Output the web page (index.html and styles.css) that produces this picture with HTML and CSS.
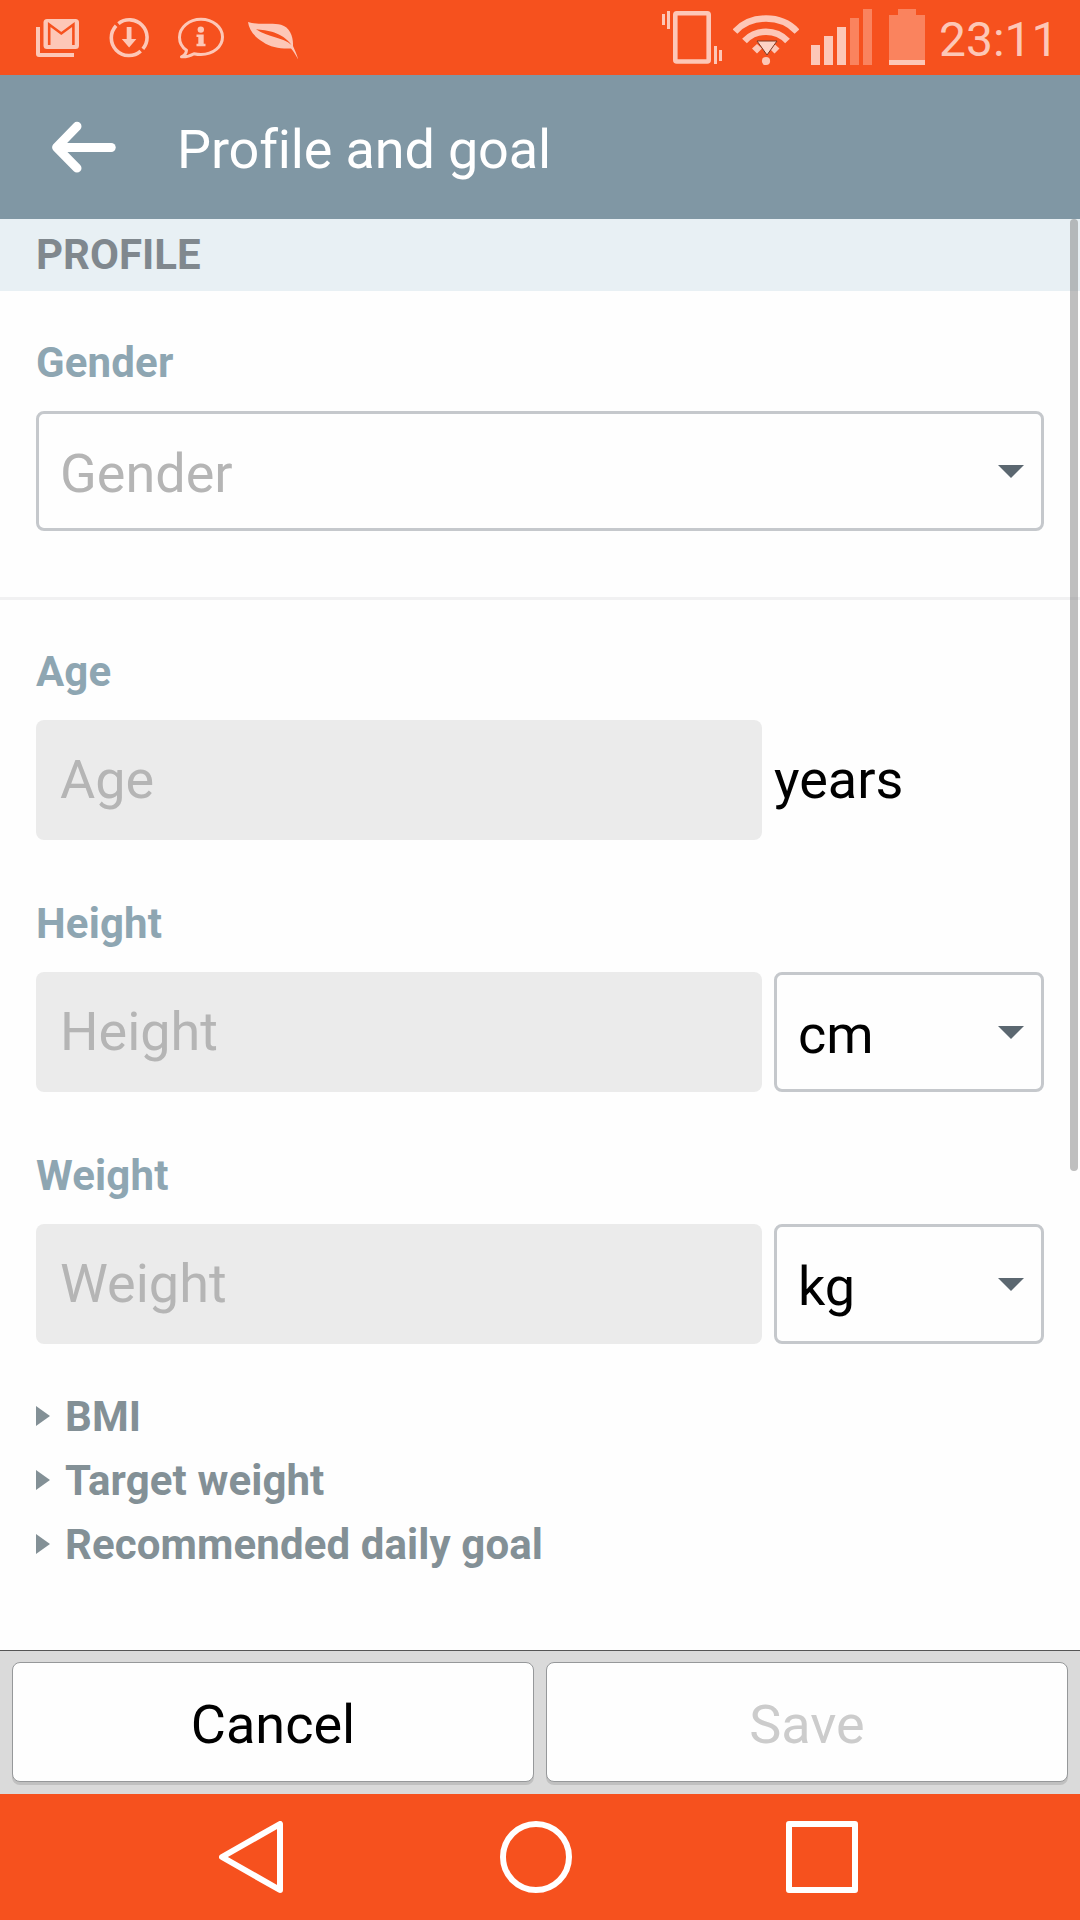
FILE: index.html
```html
<!DOCTYPE html>
<html lang="en">
<head>
<meta charset="utf-8">
<title>Profile and goal</title>
<link rel="stylesheet" href="styles.css">
</head>
<body>
<div class="screen">
  <div class="status-bar">
    <div class="status-left">
      <svg class="status-icon" width="45" height="75" viewBox="35 0 45 75">
        <path class="tint" d="M36 27h4v26h34v4H39a3 3 0 0 1-3-3z"/>
        <rect class="tint" x="43.5" y="19" width="35.5" height="30" rx="3.5"/>
        <path class="cut" d="M49.200 45V24.500L61.300 33.500 73.400 24.500V45"/>
      </svg>
      <svg class="status-icon" width="40" height="75" viewBox="109 0 40 75">
        <path class="ring" d="M118.400 23.600A17.700 17.700 0 0 1 142.900 48.900M140.700 51.100A17.700 17.700 0 0 1 116.100 25.700"/>
        <path class="tint" d="M126.700 27h4.800v12h4.900l-7.300 8.500-7.300-8.500h4.900z"/>
      </svg>
      <svg class="status-icon" width="46" height="75" viewBox="178 0 46 75">
        <path class="bubble" d="M186.500 50.300C181.800 47 179.500 42.500 179.500 37.200 179.500 27.300 189 19.300 201 19.300s21.500 8 21.500 17.700S213 54.500 201 54.500c-2.500 0-4.800-.3-7-.8-3.300 2-7.500 3.300-12.500 3.100 3.200-1.600 4.800-3.800 5-6.500z"/>
        <circle class="tint" cx="200.800" cy="29.600" r="3.200"/>
        <path class="tint" d="M196.500 34.500h7.200v9.300h1.800v2.500h-9v-2.500h1.800v-6.800h-1.800z"/>
      </svg>
      <svg class="status-icon leaf" width="52" height="75" viewBox="247 0 52 75">
        <path class="tint" d="M248 22c10 3.500 24 .5 33 2.800 9 2.500 12.500 12 12 21.200 1.500 3.500 4 8.500 5.200 13.500-2.200-4-4.700-8.500-7.200-11-10 .5-20.500-1-28-6.500C253 36 249 29 248 22z"/>
        <path class="vein" d="M256 29.300c11 1 26 2.500 35.500 15.700-8.500-8-23.500-7.500-35.500-15.700z"/>
      </svg>
    </div>
    <div class="status-right">
      <svg class="status-icon" width="62" height="75" viewBox="661 0 62 75">
        <path class="tint" d="M662 14h3v11h-3zM667 11h3v18h-3zM714 46h3v18h-3zM719 50h3v11h-3z"/>
        <rect class="phone" x="675.300" y="13.300" width="33.400" height="48.200" rx="1.500"/>
      </svg>
      <svg class="status-icon" width="66" height="75" viewBox="733 0 66 75">
        <path class="wave" d="M735 31.500c16-17.300 46-17.300 62 0M744.500 41c11.500-12.300 31.500-12.300 43 0"/>
        <path class="tint" d="m752 48.500 5-4.500 5 4.500-5 5zM769.500 48.500l5-4.500 5 4.500-5 5z"/>
        <circle class="tint" cx="766" cy="61" r="4.100"/>
        <path class="activity" d="M757 41h20l-10 14z"/>
      </svg>
      <svg class="status-icon" width="61" height="75" viewBox="811 0 61 75">
        <path class="tint" d="M811 45h9v20h-9zM824 36h9v29h-9zM837 27h9v38h-9z"/>
        <path class="dim" d="M850 18h9v47h-9zM863 9h9v56h-9z"/>
      </svg>
      <svg class="status-icon" width="36" height="75" viewBox="889 0 36 75">
        <path class="dim" d="M898 9h18v6h9v45h-36V15h9z"/>
        <path class="tint" d="M889 60h36v5h-36z"/>
      </svg>
      <span class="clock">23:11</span>
    </div>
  </div>

  <header class="app-bar">
    <svg class="back" width="66" height="54" viewBox="51 120 66 54">
      <path class="back-stroke" d="M77 126.300 56.600 147.300 77 168.100"/>
      <path class="back-stroke" d="M57.500 147.500h53.700"/>
    </svg>
    <h1 class="title">Profile and goal</h1>
  </header>

  <main class="content">
    <div class="scrollbar"></div>
    <h2 class="section-head">PROFILE</h2>
    <section class="group group-first">
      <div class="label">Gender</div>
      <div class="box select placeholder"><span>Gender</span><i class="caret"></i></div>
    </section>
    <section class="group">
      <div class="field">
        <div class="label">Age</div>
        <div class="row">
          <div class="box input placeholder">Age</div>
          <span class="unit">years</span>
        </div>
      </div>
      <div class="field">
        <div class="label">Height</div>
        <div class="row">
          <div class="box input placeholder">Height</div>
          <div class="box select unit-select"><span>cm</span><i class="caret"></i></div>
        </div>
      </div>
      <div class="field">
        <div class="label">Weight</div>
        <div class="row">
          <div class="box input placeholder">Weight</div>
          <div class="box select unit-select"><span>kg</span><i class="caret"></i></div>
        </div>
      </div>
    </section>
    <ul class="details">
      <li>BMI</li>
      <li>Target weight</li>
      <li>Recommended daily goal</li>
    </ul>
  </main>

  <footer class="actions">
    <button class="button">Cancel</button>
    <button class="button" disabled>Save</button>
  </footer>

  <nav class="nav-bar">
    <svg width="64" height="72" viewBox="219 1821 64 72"><path class="nav-stroke" d="M280 1824v66l-58-33z"/></svg>
    <svg class="home" width="72" height="72" viewBox="0 0 72 72"><circle class="nav-stroke" cx="36" cy="36" r="33"/></svg>
    <svg width="72" height="72" viewBox="0 0 72 72"><rect class="nav-stroke" x="3" y="3" width="66" height="66"/></svg>
  </nav>
</div>
</body>
</html>
```
FILE: styles.css
```css
* { box-sizing: border-box; }
body {
  margin: 0;
  font-family: Roboto, "Liberation Sans", sans-serif;
  font-size: 54px;
  color: #000;
  background: #fefefe;
}
.screen {
  display: flex;
  flex-direction: column;
  width: 1080px;
  height: 1920px;
  overflow: hidden;
}
svg { display: block; flex: none; }

/* Status bar */
.status-bar {
  display: flex;
  justify-content: space-between;
  height: 75px;
  flex: none;
  padding: 0 28px 0 35px;
  background: #f6511e;
}
.status-left { display: flex; gap: 29px; }
.leaf { margin-left: -6px; }
.status-right { display: flex; }
.status-right .status-icon { margin-right: 12px; }
.status-right .status-icon:nth-child(1) { margin-right: 10px; }
.status-right .status-icon:nth-child(3) { margin-right: 17px; }
.tint { fill: #fdc7b7; }
.dim { fill: #fa835e; }
.cut { fill: none; stroke: #f6511e; stroke-width: 2.6; }
.ring { fill: none; stroke: #fdc7b7; stroke-width: 3.6; }
.bubble { fill: none; stroke: #fdc7b7; stroke-width: 3; stroke-linejoin: round; }
.vein { fill: #f6511e; }
.phone { fill: none; stroke: #fdc7b7; stroke-width: 4.6; }
.wave { fill: none; stroke: #fdc7b7; stroke-width: 6.5; }
.activity { fill: #fdd3c6; stroke: #7c3a25; stroke-width: 1; }
.clock {
  width: 115px;
  padding: 4px 0 0 2px;
  font-size: 48px;
  line-height: 71px;
  color: #fdc7b7;
}

/* App bar */
.app-bar {
  display: flex;
  align-items: center;
  gap: 60px;
  height: 144px;
  flex: none;
  padding-left: 51px;
  background: #8097a4;
}
.back-stroke { fill: none; stroke: #fff; stroke-width: 9; stroke-linecap: round; stroke-linejoin: round; }
.title {
  margin: 0;
  padding-top: 5px;
  font-size: 54px;
  font-weight: 400;
  line-height: 64px;
  letter-spacing: -.15px;
  font-variant-ligatures: common-ligatures;
  color: #fff;
}

/* Form */
.content {
  position: relative;
  flex: 1;
  min-height: 0;
}
.scrollbar {
  position: absolute;
  top: 0;
  right: 2px;
  width: 8px;
  height: 952px;
  border-radius: 4px;
  background: rgba(128, 128, 128, .5);
}
.section-head {
  margin: 0;
  padding-left: 36px;
  font-size: 42px;
  font-weight: 700;
  line-height: 72px;
  color: #80888e;
  background: #e8f0f4;
}
.group {
  display: flex;
  flex-direction: column;
  gap: 59px;
  padding: 47px 36px 0;
}
.group-first {
  display: block;
  padding-bottom: 66px;
  border-bottom: 3px solid #f1f1f2;
}
.label {
  margin-bottom: 23px;
  font-size: 42px;
  font-weight: 700;
  line-height: 50px;
  letter-spacing: .15px;
  color: #8ea6b2;
}
.row { display: flex; gap: 12px; }
.box {
  height: 120px;
  border-radius: 8px;
  line-height: 120px;
}
.input { width: 726px; padding-left: 24px; background: #ebebeb; }
.select {
  display: flex;
  justify-content: space-between;
  padding: 0 17px 0 21px;
  border: 3px solid #c5c8cc;
}
.unit-select { width: 270px; }
.placeholder { color: #b5b5b5; }
.caret {
  width: 26px;
  height: 13px;
  margin-top: 51px;
  background: #5b6770;
  clip-path: polygon(0 0, 100% 0, 50% 100%);
}
.unit { line-height: 120px; }
.details {
  margin: 41px 0 0;
  padding: 0 36px;
  list-style: none;
  font-size: 42px;
  font-weight: 700;
  line-height: 64px;
  letter-spacing: .1px;
  color: #839096;
}
.details li { display: flex; align-items: center; gap: 15px; }
.details li::before {
  content: "";
  width: 14px;
  height: 20px;
  margin-bottom: 2px;
  background: #839096;
  clip-path: polygon(0 0, 100% 50%, 0 100%);
}

/* Footer */
.actions {
  display: flex;
  gap: 12px;
  flex: none;
  height: 144px;
  padding: 11px 12px 0;
  border-top: 1px solid #555;
  background: #dadada;
}
.button {
  flex: 1;
  height: 120px;
  padding: 4px 0 0;
  border: 1px solid #96989a;
  border-radius: 8px;
  background: #fefefe;
  box-shadow: 0 3px 0 #c0c0c0;
  font: inherit;
  color: #000;
}
.button:disabled { color: #ccc; }

/* Navigation bar */
.nav-bar {
  display: flex;
  align-items: flex-start;
  flex: none;
  height: 126px;
  padding: 27px 222px 0 219px;
  justify-content: space-between;
  background: #f6511e;
}
.home { margin-left: 2px; }
.nav-stroke { fill: none; stroke: #fff; stroke-width: 6; stroke-linejoin: round; }
```
